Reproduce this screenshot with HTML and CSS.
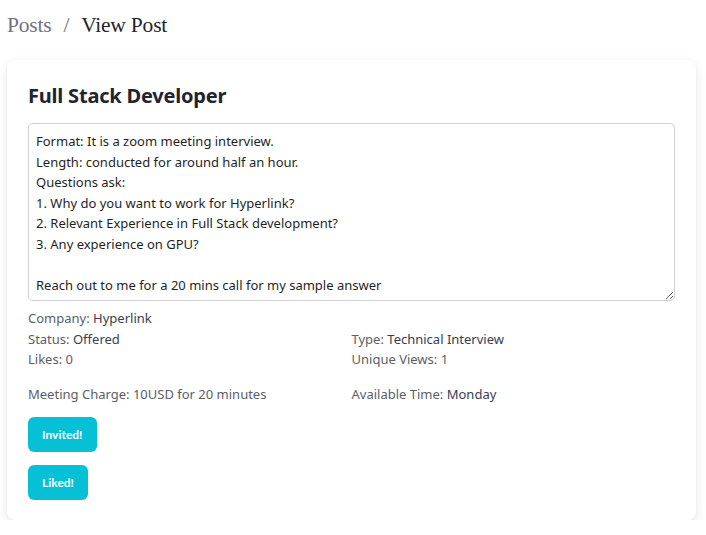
FILE: index.html
```html
<!DOCTYPE html>
<html lang="en">
<head>
<meta charset="utf-8">
<title>View Post</title>
<link rel="stylesheet" href="styles.css">
</head>
<body>
<nav class="crumbs">
  <span class="crumb-link">Posts</span>
  <span class="crumb-sep">/</span>
  <span class="crumb-current">View Post</span>
</nav>
<main class="card">
  <h1 class="title">Full Stack Developer</h1>
  <textarea class="desc" rows="8" readonly>Format: It is a zoom meeting interview.
Length: conducted for around half an hour.
Questions ask:
1. Why do you want to work for Hyperlink?
2. Relevant Experience in Full Stack development?
3. Any experience on GPU?

Reach out to me for a 20 mins call for my sample answer</textarea>
  <div class="info">
    <div class="row full"><span class="lbl">Company:</span> <span class="val">Hyperlink</span></div>
    <div class="row"><span class="lbl">Status:</span> <span class="val">Offered</span></div>
    <div class="row"><span class="lbl">Type:</span> <span class="val">Technical Interview</span></div>
    <div class="row"><span class="lbl">Likes: 0</span></div>
    <div class="row"><span class="lbl">Unique Views: 1</span></div>
    <div class="row spaced"><span class="lbl">Meeting Charge: 10USD for 20 minutes</span></div>
    <div class="row spaced"><span class="lbl">Available Time:</span> <span class="val">Monday</span></div>
  </div>
  <div class="actions">
    <button class="btn" type="button">Invited!</button>
    <button class="btn" type="button">Liked!</button>
  </div>
</main>
</body>
</html>
```
FILE: styles.css
```css
html, body {
  margin: 0;
  padding: 0;
  background: #ffffff;
}
body {
  font-family: "Noto Sans", "Open Sans", sans-serif;
  color: #212529;
}
.crumbs {
  display: flex;
  align-items: center;
  gap: 10px;
  padding: 9px 8px 0 7px;
  height: 33px;
  font-family: "Liberation Serif", serif;
  font-size: 21.5px;
  letter-spacing: -0.2px;
}
.crumb-link, .crumb-sep {
  color: #70737c;
}
.crumb-sep {
  margin: 0 2px;
}
.crumb-current {
  color: #22252e;
}
.card {
  margin: 18px 10px 0 7px;
  background: #fff;
  border-radius: 8px;
  box-shadow: 0 4px 12px rgba(0, 0, 0, 0.1), 0 0 2px rgba(0,0,0,0.04);
  padding: 23px 21px 20px 21px;
  display: flex;
  flex-direction: column;
}
.title {
  margin: 0 0 14px 0;
  font-size: 20px;
  font-weight: 700;
  line-height: 26px;
  color: #1f2430;
  letter-spacing: -0.2px;
}
.desc {
  display: block;
  box-sizing: border-box;
  width: 100%;
  height: 178px;
  margin: 0;
  padding: 7px 7px 4px 7px;
  border: 1px solid #cfd0d6;
  border-radius: 5px;
  font-family: "Noto Sans", "Open Sans", sans-serif;
  font-size: 13px;
  line-height: 20.57px;
  color: #1f1f1f;
  resize: both;
  overflow: hidden;
}
.info {
  display: grid;
  grid-template-columns: 1fr 1fr;
  font-size: 13px;
  line-height: 20.5px;
  margin-top: 7px;
}
.row.full {
  grid-column: 1 / -1;
}
.row.spaced {
  margin-top: 14px;
}
.lbl {
  color: #5b5e66;
}
.val {
  color: #3a3d4f;
}
.actions {
  display: flex;
  flex-direction: column;
  align-items: flex-start;
  gap: 13px;
  margin-top: 13px;
}
.btn {
  height: 35px;
  padding: 0 14px;
  border: none;
  border-radius: 6px;
  background: #06c1d6;
  color: #fff;
  font-family: "Lato", sans-serif;
  font-weight: 700;
  font-size: 12px;
  cursor: pointer;
}
```
